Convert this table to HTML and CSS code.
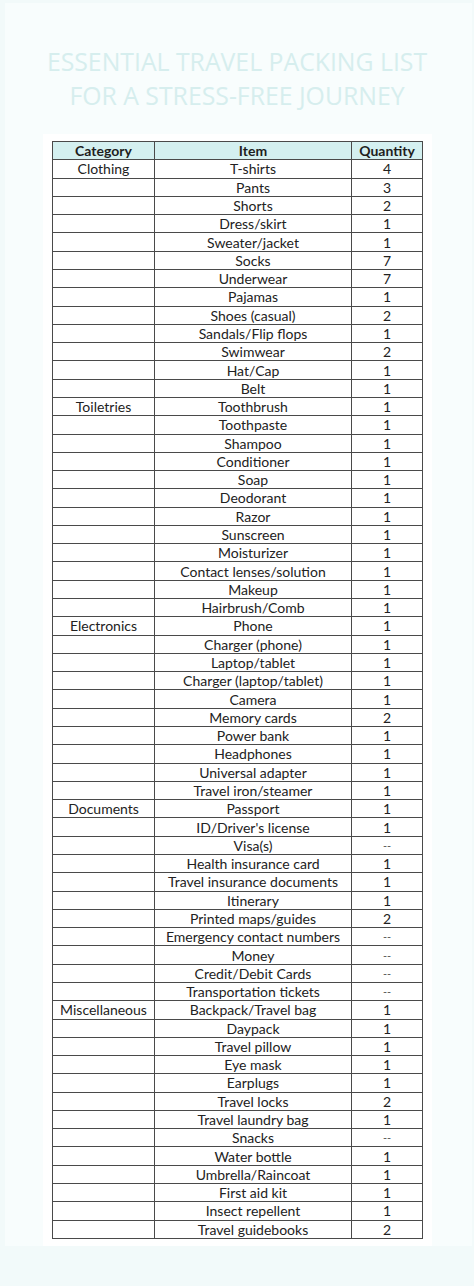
FILE: index.html
```html
<!DOCTYPE html>
<html>
<head>
<meta charset="utf-8">
<link rel="stylesheet" href="styles.css">
</head>
<body>
<div class="page">
  <h1 class="title">Essential Travel Packing List<br>for a Stress-Free Journey</h1>
  <div class="card">
    <table class="list">
      <colgroup><col class="c-cat"><col class="c-item"><col class="c-qty"></colgroup>
      <thead>
        <tr><th>Category</th><th>Item</th><th>Quantity</th></tr>
      </thead>
      <tbody>
        <tr><td>Clothing</td><td>T-shirts</td><td>4</td></tr>
        <tr><td></td><td>Pants</td><td>3</td></tr>
        <tr><td></td><td>Shorts</td><td>2</td></tr>
        <tr><td></td><td>Dress/skirt</td><td>1</td></tr>
        <tr><td></td><td>Sweater/jacket</td><td>1</td></tr>
        <tr><td></td><td>Socks</td><td>7</td></tr>
        <tr><td></td><td>Underwear</td><td>7</td></tr>
        <tr><td></td><td>Pajamas</td><td>1</td></tr>
        <tr><td></td><td>Shoes (casual)</td><td>2</td></tr>
        <tr><td></td><td>Sandals/Flip flops</td><td>1</td></tr>
        <tr><td></td><td>Swimwear</td><td>2</td></tr>
        <tr><td></td><td>Hat/Cap</td><td>1</td></tr>
        <tr><td></td><td>Belt</td><td>1</td></tr>
        <tr><td>Toiletries</td><td>Toothbrush</td><td>1</td></tr>
        <tr><td></td><td>Toothpaste</td><td>1</td></tr>
        <tr><td></td><td>Shampoo</td><td>1</td></tr>
        <tr><td></td><td>Conditioner</td><td>1</td></tr>
        <tr><td></td><td>Soap</td><td>1</td></tr>
        <tr><td></td><td>Deodorant</td><td>1</td></tr>
        <tr><td></td><td>Razor</td><td>1</td></tr>
        <tr><td></td><td>Sunscreen</td><td>1</td></tr>
        <tr><td></td><td>Moisturizer</td><td>1</td></tr>
        <tr><td></td><td>Contact lenses/solution</td><td>1</td></tr>
        <tr><td></td><td>Makeup</td><td>1</td></tr>
        <tr><td></td><td>Hairbrush/Comb</td><td>1</td></tr>
        <tr><td>Electronics</td><td>Phone</td><td>1</td></tr>
        <tr><td></td><td>Charger (phone)</td><td>1</td></tr>
        <tr><td></td><td>Laptop/tablet</td><td>1</td></tr>
        <tr><td></td><td>Charger (laptop/tablet)</td><td>1</td></tr>
        <tr><td></td><td>Camera</td><td>1</td></tr>
        <tr><td></td><td>Memory cards</td><td>2</td></tr>
        <tr><td></td><td>Power bank</td><td>1</td></tr>
        <tr><td></td><td>Headphones</td><td>1</td></tr>
        <tr><td></td><td>Universal adapter</td><td>1</td></tr>
        <tr><td></td><td>Travel iron/steamer</td><td>1</td></tr>
        <tr><td>Documents</td><td>Passport</td><td>1</td></tr>
        <tr><td></td><td>ID/Driver's license</td><td>1</td></tr>
        <tr><td></td><td>Visa(s)</td><td class="dash">--</td></tr>
        <tr><td></td><td>Health insurance card</td><td>1</td></tr>
        <tr><td></td><td>Travel insurance documents</td><td>1</td></tr>
        <tr><td></td><td>Itinerary</td><td>1</td></tr>
        <tr><td></td><td>Printed maps/guides</td><td>2</td></tr>
        <tr><td></td><td>Emergency contact numbers</td><td class="dash">--</td></tr>
        <tr><td></td><td>Money</td><td class="dash">--</td></tr>
        <tr><td></td><td>Credit/Debit Cards</td><td class="dash">--</td></tr>
        <tr><td></td><td>Transportation tickets</td><td class="dash">--</td></tr>
        <tr><td>Miscellaneous</td><td>Backpack/Travel bag</td><td>1</td></tr>
        <tr><td></td><td>Daypack</td><td>1</td></tr>
        <tr><td></td><td>Travel pillow</td><td>1</td></tr>
        <tr><td></td><td>Eye mask</td><td>1</td></tr>
        <tr><td></td><td>Earplugs</td><td>1</td></tr>
        <tr><td></td><td>Travel locks</td><td>2</td></tr>
        <tr><td></td><td>Travel laundry bag</td><td>1</td></tr>
        <tr><td></td><td>Snacks</td><td class="dash">--</td></tr>
        <tr><td></td><td>Water bottle</td><td>1</td></tr>
        <tr><td></td><td>Umbrella/Raincoat</td><td>1</td></tr>
        <tr><td></td><td>First aid kit</td><td>1</td></tr>
        <tr><td></td><td>Insect repellent</td><td>1</td></tr>
        <tr><td></td><td>Travel guidebooks</td><td>2</td></tr>
      </tbody>
    </table>
  </div>
</div>
</body>
</html>
```

FILE: styles.css
```css
html, body {
  margin: 0;
  padding: 0;
}
body {
  background: #f2fafa;
  font-family: "Lato", "Open Sans", sans-serif;
  color: #222;
  width: 474px;
  height: 1286px;
  overflow: hidden;
}
.page {
  margin: 3px 2px 0 5px;
  background: #f8fdfd;
  padding-top: 41px;
  display: flex;
  flex-direction: column;
  align-items: flex-start;
}
.title {
  margin: 0;
  width: 464px;
  text-align: center;
  font-family: "Open Sans", sans-serif;
  font-weight: 400;
  font-size: 24.8px;
  line-height: 34px;
  letter-spacing: 0;
  text-transform: uppercase;
  color: #d6eeee;
}
.card {
  margin: 22px 0 0 38px;
  width: 389px;
  background: #fff;
  padding: 7px 0 7px 9px;
  box-sizing: border-box;
}
.list {
  border-collapse: collapse;
  width: 370px;
  table-layout: fixed;
  font-size: 14px;
}
.c-cat { width: 102px; }
.c-item { width: 197px; }
.c-qty { width: 71px; }
.list th, .list td {
  border: 1px solid #4a4a4a;
  padding: 0;
  height: 17.29px;
  line-height: 17px;
  text-align: center;
  white-space: nowrap;
  overflow: hidden;
}
.list th {
  background: #d4f0f0;
  font-weight: 700;
  color: #1e1e1e;
}
.list td.dash {
  font-size: 11px;
  color: #555;
}
```
